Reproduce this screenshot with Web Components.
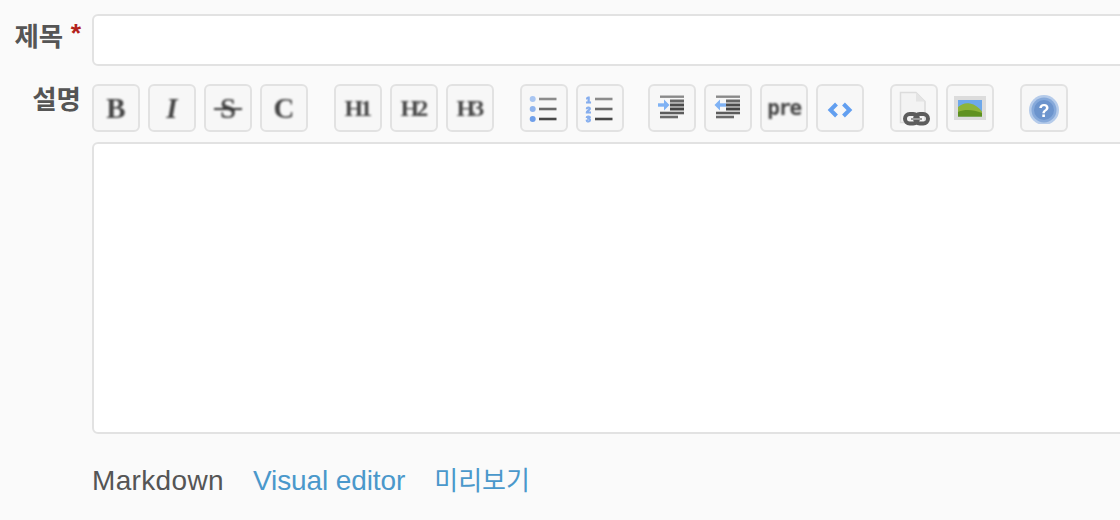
<!DOCTYPE html>
<html lang="ko">
<head>
<meta charset="utf-8">
<title>Form</title>
<style>
  html, body { margin: 0; height: 520px; overflow: hidden; background: #fafafa; }
  body { font-family: "Liberation Sans", "Noto Sans CJK KR", sans-serif; color: #555; }
</style>
</head>
<body>
<issue-form></issue-form>

<script>
const lines = `<path d="M11 7h17.500" stroke="#8c8c8c" stroke-width="2.600"/><path d="M11 17h17.500" stroke="#696969" stroke-width="2.600"/><path d="M11 27h17.500" stroke="#474747" stroke-width="2.600"/>`;
const textBars = `<path d="M4 4.700h24" stroke="#8a8a8a" stroke-width="2.400"/>
      <path d="M14 9h14" stroke="#666" stroke-width="3"/><path d="M14 13h14" stroke="#4c4c4c" stroke-width="3"/><path d="M14 17h14" stroke="#444" stroke-width="3"/>
      <path d="M4 21h24" stroke="#5c5c5c" stroke-width="2.600"/><path d="M4 25h18" stroke="#6a6a6a" stroke-width="2.600"/>`;
const icons = {
  ul: `<svg width="32" height="32" viewBox="0 0 32 32">
      <circle cx="4.700" cy="7" r="3" fill="#a9c6f2"/><circle cx="4.700" cy="17" r="3" fill="#8fb4ee"/><circle cx="4.700" cy="27" r="3" fill="#6f9fea"/>${lines}</svg>`,
  ol: `<svg width="32" height="32" viewBox="0 0 32 32">
      <g fill="#86aeee" stroke="#86aeee" stroke-width="1" font-family="Liberation Sans" font-weight="700" font-size="8.600" text-anchor="middle"><text x="4.500" y="10.500">1</text><text x="4.500" y="20.500">2</text><text x="4.500" y="30">3</text></g>${lines}</svg>`,
  indent: `<svg width="32" height="32" viewBox="0 0 32 32">${textBars}
      <path d="M2 13h7" stroke="#7fb2f4" stroke-width="3.400"/><path d="M8 7.500l5.500 5.500L8 18.500z" fill="#7fb2f4"/></svg>`,
  outdent: `<svg width="32" height="32" viewBox="0 0 32 32">${textBars}
      <path d="M7 13h7" stroke="#7fb2f4" stroke-width="3.400"/><path d="M8 7.500L2.500 13 8 18.500z" fill="#7fb2f4"/></svg>`,
  code: `<svg width="32" height="32" viewBox="0 0 32 32">
      <path d="M12.500 12L6.500 18l6 6M19.500 12l6 6-6 6" fill="none" stroke="#629ff0" stroke-width="4"/></svg>`,
  link: `<svg width="32" height="38" viewBox="0 0 32 38">
      <path d="M2.500 3.500h15.500l9 9v21H2.500z" fill="#f3f3f3" stroke="#dcdcdc" stroke-width="1.500"/><path d="M18 3.500v9h9z" fill="#e4e4e4"/>
      <g fill="none" stroke="#5c5c5c" stroke-width="4"><rect x="7" y="25" width="13" height="9.500" rx="4.700"/><rect x="17" y="25" width="13" height="9.500" rx="4.700"/></g>
      <path d="M13 30h11" stroke="#9a9a9a" stroke-width="2"/></svg>`,
  image: `<svg width="32" height="26" viewBox="0 0 32 26">
      <rect x="0" y="1" width="32" height="24" fill="#dcdcdc"/>
      <rect x="4" y="5" width="24" height="16.500" fill="#6ea8ea"/>
      <path d="M4 12c4-3.500 8-4.500 12-3.500 5 1 9 4 12 8v5H4z" fill="#8db43a"/><path d="M4 17c7-3 15-2.500 24 1v3.500H4z" fill="#5f9120"/></svg>`,
  help: `<svg width="32" height="32" viewBox="0 0 32 32">
      <circle cx="16" cy="18" r="15" fill="#b5cbea"/><circle cx="16" cy="18" r="12.500" fill="#86a9da"/><circle cx="16" cy="18" r="10" fill="#6c94cd"/>
      <text x="16" y="24.500" text-anchor="middle" font-family="Liberation Sans" font-weight="700" font-size="18" fill="#fff">?</text></svg>`
};

class ToolButton extends HTMLElement {
  connectedCallback() {
    const icon = this.getAttribute('icon');
    this.attachShadow({ mode: 'open' });
    this.shadowRoot.innerHTML = `
      <style>
        :host {
          display: flex;
          box-sizing: border-box;
          width: 48px;
          height: 48px;
          align-items: center;
          justify-content: center;
          background: #f7f7f7;
          border: 2px solid #e2e2e2;
          border-radius: 6px;
          color: #444;
          font: 700 29px/1 "Liberation Serif", "DejaVu Serif", serif;
        }
        :host([small]) { font-size: 24px; letter-spacing: -2.800px; }
        :host([small]) .ink { margin-right: 2px; }
        :host([italic]) { font-style: italic; }
        :host([mono]) { font: 700 21px/1 "DejaVu Sans Mono", monospace; letter-spacing: -1.500px; }
        .ink { display: flex; filter: blur(.8px); position: relative; }
        :host([icon]) .ink { filter: blur(.6px); }
        svg { display: block; }
        :host([strike]) .ink::after {
          content: "";
          position: absolute;
          left: -6px; right: -6px; top: 14px;
          height: 2px;
          background: #333;
        }
      </style>
      <div class="ink">${icon ? icons[icon] : '<slot></slot>'}</div>`;
  }
}

class ToolBar extends HTMLElement {
  connectedCallback() {
    this.attachShadow({ mode: 'open' });
    this.shadowRoot.innerHTML = `
      <style>
        :host { display: flex; gap: 26px; margin-bottom: 10px; }
      </style>
      <slot></slot>`;
  }
}

class FormRow extends HTMLElement {
  connectedCallback() {
    this.attachShadow({ mode: 'open' });
    this.shadowRoot.innerHTML = `
      <style>
        :host {
          display: grid;
          grid-template-columns: 81px 1060px;
          column-gap: 11px;
        }
        .label {
          padding-top: var(--label-top, 0px);
          text-align: right;
          font: 700 26.500px/var(--label-line, 38px) "Noto Sans CJK KR", "Liberation Sans", sans-serif;
          color: #555;
          white-space: nowrap;
        }
        .req { color: #b3211c; font-family: "Liberation Sans", sans-serif; vertical-align: 4px; }
      </style>
      <div class="label">${this.getAttribute('label')}${this.hasAttribute('required') ? ' <span class="req">*</span>' : ''}</div>
      <div><slot></slot></div>`;
  }
}

class TextField extends HTMLElement {
  connectedCallback() {
    this.attachShadow({ mode: 'open' });
    this.shadowRoot.innerHTML = `
      <style>
        :host {
          display: block;
          box-sizing: border-box;
          height: var(--field-height, 52px);
          background: #fff;
          border: 2px solid #e2e2e2;
          border-radius: 6px;
        }
      </style>`;
  }
}

class TabLinks extends HTMLElement {
  connectedCallback() {
    this.attachShadow({ mode: 'open' });
    this.shadowRoot.innerHTML = `
      <style>
        :host {
          display: flex;
          align-items: baseline;
          gap: 29px;
          margin-left: 92px;
          font: 28px/36px "Liberation Sans", "Noto Sans CJK KR", sans-serif;
          color: #555;
        }
        ::slotted(span) { letter-spacing: .35px; }
        ::slotted(a) { color: #4a98cb; text-decoration: none; letter-spacing: -.1px; }
      </style>
      <slot></slot>`;
  }
}

class IssueForm extends HTMLElement {
  connectedCallback() {
    this.attachShadow({ mode: 'open' });
    this.shadowRoot.innerHTML = `
      <style>
        :host { display: block; padding-top: 14px; }
        form-row { margin-bottom: 18px; }
        form-row.desc { margin-bottom: 27px; --label-top: 0px; --label-line: 28px; }
        .group { display: flex; gap: 8px; }
        .tight { margin-right: -2px; }
        tab-links a[lang="ko"] { font: 400 26px/36px "Noto Sans CJK KR", sans-serif; letter-spacing: 0; }
      </style>
      <form-row label="제목" required><text-field></text-field></form-row>
      <form-row class="desc" label="설명">
        <tool-bar>
          <div class="group">
            <tool-button>B</tool-button>
            <tool-button italic>I</tool-button>
            <tool-button strike>S</tool-button>
            <tool-button>C</tool-button>
          </div>
          <div class="group">
            <tool-button small>H1</tool-button>
            <tool-button small>H2</tool-button>
            <tool-button small>H3</tool-button>
          </div>
          <div class="group tight">
            <tool-button icon="ul"></tool-button>
            <tool-button icon="ol"></tool-button>
          </div>
          <div class="group">
            <tool-button icon="indent"></tool-button>
            <tool-button icon="outdent"></tool-button>
            <tool-button mono>pre</tool-button>
            <tool-button icon="code"></tool-button>
          </div>
          <div class="group">
            <tool-button icon="link"></tool-button>
            <tool-button icon="image"></tool-button>
          </div>
          <div class="group">
            <tool-button icon="help"></tool-button>
          </div>
        </tool-bar>
        <text-field style="--field-height: 292px"></text-field>
      </form-row>
      <tab-links>
        <span>Markdown</span>
        <a href="#" lang="en">Visual editor</a>
        <a href="#" lang="ko">미리보기</a>
      </tab-links>`;
  }
}

customElements.define('tool-button', ToolButton);
customElements.define('tool-bar', ToolBar);
customElements.define('form-row', FormRow);
customElements.define('text-field', TextField);
customElements.define('tab-links', TabLinks);
customElements.define('issue-form', IssueForm);
</script>
</body>
</html>
